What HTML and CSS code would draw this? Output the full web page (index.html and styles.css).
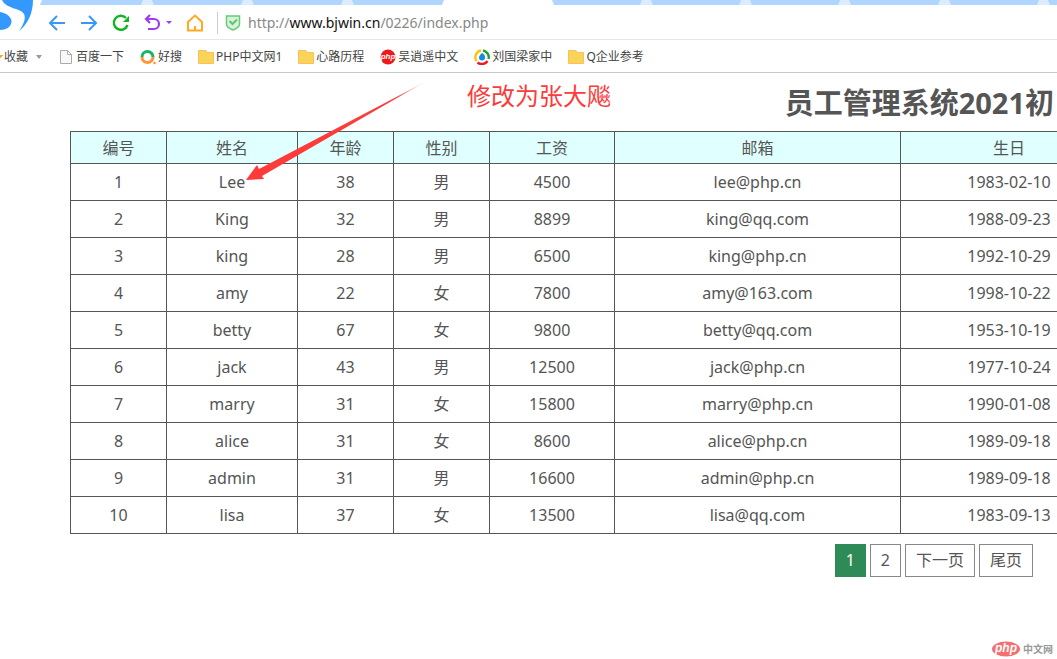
FILE: index.html
```html
<!DOCTYPE html>
<html lang="zh-CN">
<head>
<meta charset="utf-8">
<title>员工管理系统</title>
<link rel="stylesheet" href="styles.css">
</head>
<body>
<header class="browser">
  <div class="tabstrip">
    <svg class="tabs" width="1240" height="5" viewBox="0 0 1240 5" aria-hidden="true">
      <path fill="#b0d5ff" d="M42 0H1240V5H40Z"/>
      <path fill="#dcecff" d="M143 0h9l2 5h-13zM243 0h9l2 5h-13zM343 0h9l2 5h-13zM642 0h9l2 5h-13zM741 0h9l2 5h-13zM840 0h9l2 5h-13zM940 0h9l2 5h-13zM1039 0h9l2 5h-13zM1139 0h9l2 5h-13z"/>
      <path fill="#fff" d="M444 0H552L554 5H442Z"/>
    </svg>
  </div>
  <svg class="brand" width="42" height="34" viewBox="0 0 42 34" aria-hidden="true">
    <path fill="#3399ff" d="M2 0H33C33 13 28 24 19 31C24 24 26 18 24 14C21 8 6 9 2 0Z"/>
    <path fill="#3399ff" d="M0 12C6 13 12 17 11.500 22C11 27 6 30 0 30Z"/>
  </svg>
  <div class="toolbar">
    <button class="tool" aria-label="后退"><svg width="18" height="18" viewBox="0 0 18 18"><path d="M17 9H2M9 2L2 9L9 16" fill="none" stroke="#3c96fa" stroke-width="2"/></svg></button>
    <button class="tool" aria-label="前进"><svg width="18" height="18" viewBox="0 0 18 18"><path d="M1 9H16M9 2L16 9L9 16" fill="none" stroke="#3c96fa" stroke-width="2"/></svg></button>
    <button class="tool" aria-label="刷新"><svg width="18" height="18" viewBox="0 0 18 18"><path d="M14 4A7 7 0 1 0 15.500 11" fill="none" stroke="#12b422" stroke-width="2.400"/><path d="M17 2V8H11Z" fill="#12b422"/></svg></button>
    <button class="tool" aria-label="撤销"><svg width="28" height="18" viewBox="0 0 28 18"><path d="M6 1L2 5L6 9M2 5H10A5 5 0 0 1 10 15H4" fill="none" stroke="#9a3df0" stroke-width="2.200"/><path d="M22 7H28L25 10Z" fill="#9a3df0"/></svg></button>
    <button class="tool" aria-label="主页"><svg width="18" height="18" viewBox="0 0 18 18"><path d="M2 16.500V8L9 1.500L16 8V16.500ZM9 16.500V12" fill="none" stroke="#ffaa22" stroke-width="2"/></svg></button>
    <div class="address">
      <svg width="16" height="18" viewBox="0 0 16 18" aria-hidden="true"><path d="M1.500 2H14.500V10C14.500 13 12 14.500 8 16C4 14.500 1.500 13 1.500 10Z" fill="#d5f5da" stroke="#6cc97b" stroke-width="1.500"/><path d="M4.500 7L7.500 10L12 5.500" fill="none" stroke="#62c471" stroke-width="2"/></svg>
      <span class="url">http://<b>www.bjwin.cn</b>/0226/index.php</span>
    </div>
  </div>
  <nav class="bookmarks">
    <a class="fav" href="#"><i class="star"></i>收藏<svg width="6" height="4" viewBox="0 0 6 4" aria-hidden="true"><path fill="#999" d="M0 0H6L3 4Z"/></svg></a>
    <a href="#"><svg width="16" height="16" viewBox="0 0 16 16"><path d="M2.500 1.500H9.500L13.500 5.500V14.500H2.500ZM9.500 1.500V5.500H13.500" fill="#f8f8f8" stroke="#aaa"/></svg>百度一下</a>
    <a href="#"><svg width="16" height="16" viewBox="0 0 16 16"><path d="M2 8A5.500 5.500 0 0 1 13 8" fill="none" stroke="#18b566" stroke-width="3"/><path d="M2 8A5.500 5.500 0 0 0 13 8" fill="none" stroke="#ff9638" stroke-width="3"/><circle cx="14.500" cy="14" r="1.200" fill="#ff8b2c"/></svg>好搜</a>
    <a href="#"><svg width="16" height="16" viewBox="0 0 16 16"><path d="M.5 1.500H8L9 3.500H15.500V14.500H.5Z" fill="#f8d458" stroke="#fbc05c"/></svg>PHP中文网1</a>
    <a href="#"><svg width="16" height="16" viewBox="0 0 16 16"><path d="M.5 1.500H8L9 3.500H15.500V14.500H.5Z" fill="#f8d458" stroke="#fbc05c"/></svg>心路历程</a>
    <a href="#"><svg width="16" height="16" viewBox="0 0 16 16"><circle cx="8" cy="8" r="7.500" fill="#f01818"/><text class="php" x="8" y="10" text-anchor="middle">php</text></svg>吴逍遥中文</a>
    <a href="#"><svg width="16" height="16" viewBox="0 0 16 16"><g fill="none" stroke-width="2.400"><path d="M2.500 12A6.800 6.800 0 0 1 7 1.500" stroke="#ffc400"/><path d="M9 1.500A6.800 6.800 0 0 1 14.500 10" stroke="#20a038"/><path d="M13.500 12A6.800 6.800 0 0 1 3.500 13.500" stroke="#f01820"/></g><path d="M8 4C10.500 5 11 7 11 8.500A3 3 0 0 1 5 8.500C5 7 6 6 8 4Z" fill="#168bdc"/></svg>刘国梁家中</a>
    <a href="#"><svg width="16" height="16" viewBox="0 0 16 16"><path d="M.5 1.500H8L9 3.500H15.500V14.500H.5Z" fill="#f8d458" stroke="#fbc05c"/></svg>Q企业参考</a>
  </nav>
</header>
<main class="page">
  <h1 class="title">员工管理系统2021初</h1>
  <table class="staff">
    <colgroup><col class="c-id"><col class="c-name"><col class="c-id"><col class="c-id"><col class="c-pay"><col><col class="c-birth"></colgroup>
    <thead><tr><th>编号</th><th>姓名</th><th>年龄</th><th>性别</th><th>工资</th><th>邮箱</th><th>生日</th></tr></thead>
    <tbody>
      <tr><td>1</td><td>Lee</td><td>38</td><td>男</td><td>4500</td><td>lee@php.cn</td><td>1983-02-10</td></tr>
      <tr><td>2</td><td>King</td><td>32</td><td>男</td><td>8899</td><td>king@qq.com</td><td>1988-09-23</td></tr>
      <tr><td>3</td><td>king</td><td>28</td><td>男</td><td>6500</td><td>king@php.cn</td><td>1992-10-29</td></tr>
      <tr><td>4</td><td>amy</td><td>22</td><td>女</td><td>7800</td><td>amy@163.com</td><td>1998-10-22</td></tr>
      <tr><td>5</td><td>betty</td><td>67</td><td>女</td><td>9800</td><td>betty@qq.com</td><td>1953-10-19</td></tr>
      <tr><td>6</td><td>jack</td><td>43</td><td>男</td><td>12500</td><td>jack@php.cn</td><td>1977-10-24</td></tr>
      <tr><td>7</td><td>marry</td><td>31</td><td>女</td><td>15800</td><td>marry@php.cn</td><td>1990-01-08</td></tr>
      <tr><td>8</td><td>alice</td><td>31</td><td>女</td><td>8600</td><td>alice@php.cn</td><td>1989-09-18</td></tr>
      <tr><td>9</td><td>admin</td><td>31</td><td>男</td><td>16600</td><td>admin@php.cn</td><td>1989-09-18</td></tr>
      <tr><td>10</td><td>lisa</td><td>37</td><td>女</td><td>13500</td><td>lisa@qq.com</td><td>1983-09-13</td></tr>
    </tbody>
  </table>
  <nav class="pager">
    <a class="current" href="#">1</a><a href="#">2</a><a href="#">下一页</a><a href="#">尾页</a>
  </nav>
  <svg class="arrow" width="180" height="102" viewBox="0 0 180 102" aria-hidden="true"><defs><linearGradient id="tail" x1="1" y1="0" x2="0" y2="1"><stop offset="0" stop-color="#fd3b3b" stop-opacity=".3"/><stop offset=".15" stop-color="#fd3b3b"/></linearGradient></defs><path fill="url(#tail)" d="M177 1L16 94L18 97L0 98L11 83L13 87Z"/></svg>
  <p class="note">修改为张大飚</p>
</main>
<div class="watermark"><svg width="28" height="16" viewBox="0 0 28 16" aria-hidden="true"><ellipse cx="14" cy="8" rx="14" ry="7.500" fill="#f47070"/><text class="wm-php" x="14" y="11" text-anchor="middle">php</text></svg><span>中文网</span></div>
</body>
</html>
```

FILE: styles.css
```css
* { box-sizing: border-box; }
body {
  margin: 0;
  min-height: 100vh;
  position: relative;
  overflow: hidden;
  background: #fff;
  color: #555;
  font-family: "Noto Sans", "Noto Sans CJK SC", sans-serif;
  font-size: 16px;
}
a { color: inherit; text-decoration: none; }
svg { flex: none; display: block; }

.browser { position: relative; }
.tabstrip { height: 5px; overflow: hidden; }
.brand { position: absolute; left: 0; top: 0; }
.toolbar {
  display: flex;
  align-items: center;
  gap: 14px;
  height: 35px;
  padding: 2px 0 0 48px;
  border-bottom: 1px solid #e6e6e6;
}
.tool { padding: 0; border: 0; background: none; }
.address {
  display: flex;
  align-items: center;
  gap: 7px;
  height: 22px;
  margin-left: -1px;
  padding-left: 7px;
  border-left: 1px solid #ccc;
}
.url { color: #888; font-size: 14px; line-height: 20px; }
.url b { color: #111; font-weight: 400; }

.bookmarks {
  display: flex;
  align-items: center;
  gap: 16px;
  height: 33px;
  padding-top: 1px;
  border-bottom: 1px solid #c8c8c8;
  color: #444;
  font-size: 12px;
  line-height: 18px;
  white-space: nowrap;
}
.bookmarks a { display: flex; align-items: center; gap: 2px; }
.bookmarks .fav { gap: 8px; }
.star { width: 4px; height: 4px; margin-right: -8px; background: linear-gradient(135deg, #ffa726 50%, #fff 50%); }
.php { fill: #fff; font: italic 700 8px "Liberation Sans", sans-serif; }

.page { position: relative; padding-left: 70px; }
.title {
  margin: 0;
  height: 58px;
  padding: 10px 3px 0 0;
  text-align: right;
  font-size: 29px;
  line-height: 40px;
  white-space: nowrap;
}
.staff {
  width: calc(100% + 61px);
  table-layout: fixed;
  border-collapse: collapse;
  text-align: center;
}
.c-id { width: 96px; }
.c-name { width: 131px; }
.c-pay { width: 125px; }
.c-birth { width: 217px; }
.staff th, .staff td { border: 1px solid #555; padding: 0; font-weight: 400; line-height: 24px; }
.staff th { height: 32px; background: #e0ffff; }
.staff td { height: 37px; }

.pager {
  display: flex;
  justify-content: flex-end;
  gap: 4px;
  padding: 10px 24px 0 0;
}
.pager a { padding: 4px 10px; border: 1px solid #888; line-height: 23px; }
.pager .current { border-color: #2e8b57; background: #2e8b57; color: #fff; }

.arrow { position: absolute; left: 246px; top: 9px; }
.note {
  position: absolute;
  left: 467px;
  top: 6px;
  margin: 0;
  color: #fd3b3b;
  font-size: 24px;
  line-height: 34px;
}
.watermark {
  position: absolute;
  right: 4px;
  bottom: 2px;
  display: flex;
  align-items: center;
  gap: 3px;
  color: #999;
  font-size: 10px;
  font-weight: 700;
  line-height: 16px;
}
.wm-php { fill: #fff; font: italic 700 12px "Liberation Sans", sans-serif; }
```
